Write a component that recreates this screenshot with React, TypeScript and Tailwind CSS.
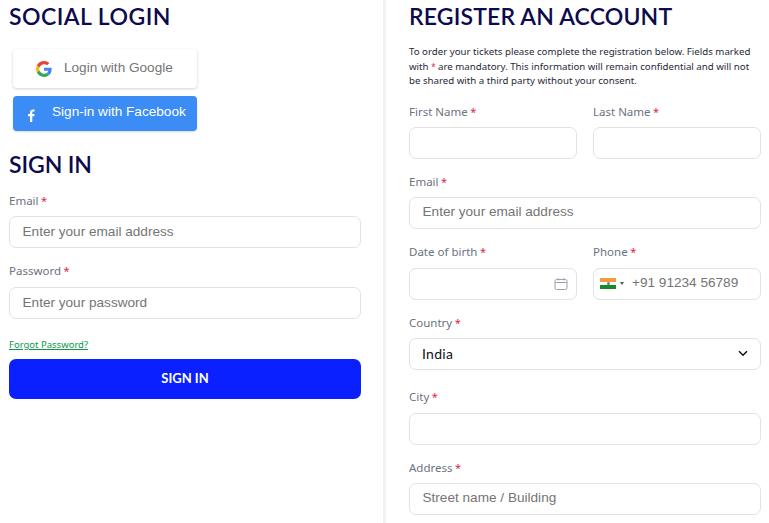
import React from "react";

const Star = () => <span className="text-[#e11d48] text-[11px] -ml-[0.5px]">*</span>;

function Label({ text, className = "" }: { text: string; className?: string }) {
  return (
    <div className={`h-[16px] leading-[14px] text-[11.5px] text-[#6b7280] font-['Noto_Sans',sans-serif] ${className}`}>
      {text} <Star />
    </div>
  );
}

function Box({ children, className = "" }: { children?: React.ReactNode; className?: string }) {
  return (
    <div className={`h-[32px] w-full border border-[#e2e2e2] rounded-[7px] bg-white flex items-center font-['Liberation_Sans',sans-serif] text-[13.6px] text-[#757575] ${className}`}>
      {children}
    </div>
  );
}

function GoogleIcon() {
  return (
    <svg width="16" height="16" viewBox="0 0 48 48">
      <path fill="#EA4335" d="M24 9.5c3.5 0 6.7 1.2 9.2 3.6l6.9-6.9C35.9 2.4 30.5 0 24 0 14.6 0 6.5 5.4 2.6 13.2l8 6.2C12.5 13.7 17.800 9.500 24 9.500z" />
      <path fill="#4285F4" d="M46.900 24.500c0-1.600-.1-3.100-.4-4.500H24v9h12.900c-.6 3-2.200 5.500-4.700 7.200l7.700 6c4.500-4.200 7-10.300 7-17.700z" />
      <path fill="#FBBC05" d="M10.500 28.600c-.5-1.400-.8-3-.8-4.600s.3-3.200.8-4.600l-8-6.200C.9 16.400 0 20.100 0 24s.9 7.600 2.600 10.800l7.900-6.200z" />
      <path fill="#34A853" d="M24 48c6.500 0 11.900-2.100 15.900-5.800l-7.700-6c-2.100 1.400-4.900 2.300-8.200 2.300-6.200 0-11.500-4.200-13.400-9.900l-8 6.200C6.500 42.600 14.600 48 24 48z" />
    </svg>
  );
}

function India() {
  return (
    <div className="w-[16px] h-[11px] flex flex-col shrink-0">
      <div className="h-[4px] bg-[#f59a3c]" />
      <div className="h-[3px] bg-white flex items-center justify-center">
        <div className="w-[3px] h-[3px] rounded-full bg-[#6a78a8]" />
      </div>
      <div className="h-[4px] bg-[#138a2c]" />
    </div>
  );
}

const headingCls = "h-[32px] leading-[32px] text-[23px] font-semibold text-[#0d0a4d] font-['Lato',sans-serif]";

export default function App() {
  return (
    <div className="w-[769px] h-[523px] overflow-hidden bg-white flex">
      <div className="w-[383px] shrink-0 pl-[9px] pr-[22px]">
        <h1 className={`${headingCls} tracking-[0.45px]`}>SOCIAL LOGIN</h1>
        <div className="mt-[17px] ml-[4px] w-[184px] h-[39px] rounded-[4px] bg-white shadow-[0_1px_3px_rgba(0,0,0,0.18)] flex items-center pl-[23px] gap-[12px] font-['Liberation_Sans',sans-serif] text-[13.6px] text-[#757575]">
          <GoogleIcon />
          <span>Login with Google</span>
        </div>
        <div className="mt-[8px] ml-[4px] w-[184px] h-[35px] rounded-[4px] bg-[#3b8cf5] shadow-[0_1px_2px_rgba(0,0,0,0.15)] flex items-center pl-[14px] gap-[16px] font-['Liberation_Sans',sans-serif] text-[13.6px] text-white">
          <svg width="9" height="13" viewBox="0 0 9 13" className="mt-[3px]">
            <path fill="#fff" d="M3 13V7.300H1V5h2V3.400C3 1.400 4.200.4 5.900.4c.8 0 1.500.1 1.700.1v2.100H6.400c-.9 0-1.100.5-1.100 1.100V5h2.300l-.3 2.300h-2V13z" />
          </svg>
          <span className="-mt-[2px]">Sign-in with Facebook</span>
        </div>
        <h2 className={`${headingCls} mt-[17px] -tracking-[0.1px]`}>SIGN IN</h2>
        <Label text="Email" className="mt-[14px]" />
        <Box className="mt-[6px] pl-[12.500px]">Enter your email address</Box>
        <Label text="Password" className="mt-[16px]" />
        <Box className="mt-[7px] pl-[12.500px]">Enter your password</Box>
        <div className="mt-[16px] h-[14px] leading-[14px]">
          <a className="text-[9.500px] text-[#0a9a4a] underline font-['Noto_Sans',sans-serif]">Forgot Password?</a>
        </div>
        <button className="mt-[10px] w-full h-[40px] rounded-[7px] bg-[#0a20ff] text-white text-[13px] font-bold font-['Lato',sans-serif]">SIGN IN</button>
      </div>

      <div className="w-[3px] shrink-0 bg-[#f2f2f2]" />

      <div className="flex-1 pl-[23px] pr-[8px]">
        <h1 className={`${headingCls} tracking-[0.15px]`}>REGISTER AN ACCOUNT</h1>
        <p className="mt-[13px] text-[9.700px] leading-[14.500px] text-[#1f2937] font-['Noto_Sans',sans-serif]">
          To order your tickets please complete the registration below. Fields marked with <span className="text-[#e11d48] text-[8px] leading-[8px]">*</span> are mandatory. This information will remain confidential and will not be shared with a third party without your consent.
        </p>
        <div className="mt-[16px] grid grid-cols-2 gap-x-[16px]">
          <div>
            <Label text="First Name" />
            <Box className="mt-[6px]" />
          </div>
          <div>
            <Label text="Last Name" />
            <Box className="mt-[6px]" />
          </div>
        </div>
        <Label text="Email" className="mt-[16px]" />
        <Box className="mt-[6px] pl-[12.500px]">Enter your email address</Box>
        <div className="mt-[16px] grid grid-cols-2 gap-x-[16px]">
          <div>
            <Label text="Date of birth" />
            <Box className="mt-[7px] justify-end pr-[8px]">
              <svg width="14" height="14" viewBox="0 0 14 14" fill="none" stroke="#9ca3af" strokeWidth="1">
                <rect x="1" y="2.500" width="12" height="10" rx="1.500" />
                <path d="M1 5.500h12M4 1v2.500M10 1v2.500" />
              </svg>
            </Box>
          </div>
          <div>
            <Label text="Phone" />
            <Box className="mt-[7px] pl-[6px]">
              <India />
              <span className="ml-[4px] w-0 h-0 border-x-[2.500px] border-x-transparent border-t-[3px] border-t-[#555]" />
              <span className="ml-[8px]">+91 91234 56789</span>
            </Box>
          </div>
        </div>
        <Label text="Country" className="mt-[16px]" />
        <Box className="mt-[6px] pl-[12px] pr-[12px] justify-between">
          <span className="text-[14px] text-[#111] font-['Lato',sans-serif] tracking-[0.3px]">India</span>
          <svg width="10" height="7" viewBox="0 0 10 7" fill="none" stroke="#111" strokeWidth="1.500">
            <path d="M1 1.200l4 4 4-4" />
          </svg>
        </Box>
        <Label text="City" className="mt-[20px]" />
        <Box className="mt-[7px]" />
        <Label text="Address" className="mt-[16px]" />
        <Box className="mt-[6px] pl-[12.500px]">Street name / Building</Box>
      </div>
    </div>
  );
}
